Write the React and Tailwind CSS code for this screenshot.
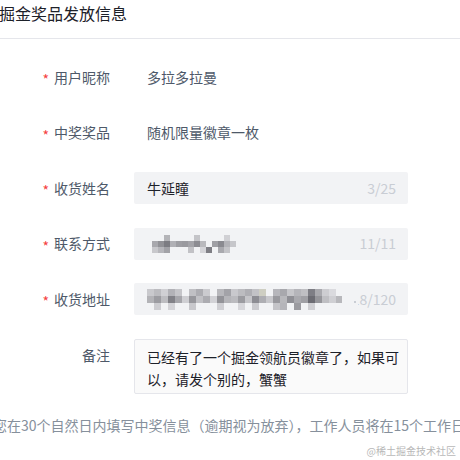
import React from 'react';

const FONT = { fontFamily: '"Noto Sans CJK SC", "Noto Sans", sans-serif' };

// pixelated mosaic that hides private data
const Mosaic = ({ width, cells, rows, size = 6 }) => (
  <svg width={width} height={rows * size} className="block shrink-0">
    {cells.map((row, r) =>
      row.map((c, i) =>
        c ? <rect key={r + '-' + i} x={i * size} y={r * size} width={size} height={size} fill={c} /> : null
      )
    )}
  </svg>
);

const phoneCells = [
  [null, null, '#b4b4b8', null, null, null, null, '#c4c4c8', null, null, null, null, '#d0d0d4', null, null],
  ['#a8a8ad', '#929297', '#7c7c82', '#b0b0b5', '#9e9ea3', '#9a9a9f', '#a4a4a9', '#8c8c92', '#b9b9bd', null, '#a0a0a5', '#8a8a90', '#b3b3b8', '#c6c6ca', null],
  ['#c8c8cc', '#b6b6bb', '#a2a2a7', null, null, null, '#c2c2c6', null, '#d4d4d8', '#7e7e84', null, '#a9a9ae', '#c4c4c8', null, null],
];

const addrCells = [
  ['#c9c9cd', '#bcbcc0', '#d0d0d4', '#b2b2b7', '#c5c5c9', null, '#c0c0c4', '#adadb2', '#cbcbcf', null, '#b8b8bc', '#a3a3a8', '#c9c9cd', '#bcbcc0', '#afafb4', '#c2c2c6', '#cecec2', null, '#b6b6bb', '#a8a8ad', '#c6c6ca', '#b5b5ba', '#bfbfc3', '#7e7e85', '#a9a9ae', '#cdcdd1', '#dadade', null, null, null],
  ['#b3b3b7', '#9c9ca1', '#bdbdc1', '#818187', '#a6a6ab', '#cfcfd3', '#97979c', '#c1c1c5', '#acacb1', '#d2d2d6', '#939398', '#b5b5b9', '#bbbbbf', '#9b9ba0', '#c5c5c9', '#8d8d93', '#aeaeb3', '#c8c8cc', '#99999e', '#b8b8bc', '#8f8f95', '#a9a9ae', '#a0a0a5', '#6c6c73', '#95959a', '#bfbfc3', '#cfcfd3', '#b8b8bc', '#c3c3c7', '#cbcbcf'],
  [null, '#cdcdd1', null, '#d3d3d7', null, null, '#c8c8cc', null, null, null, '#cfcfd3', null, null, '#d6d6da', null, '#cbcbcf', null, null, '#c4c4c8', '#b5b5ba', null, '#9b9ba0', null, '#cfcfd3', null, null, null, null, null, null],
];

const Label = ({ required, children }) => (
  <div className="w-[110px] shrink-0 flex items-center justify-end gap-[5px] text-[14px] text-[#4e5969]">
    {required && <span className="text-[#f53f3f] text-[14px] leading-none translate-y-[2px]">*</span>}
    <span>{children}</span>
  </div>
);

const Row = ({ label, required = true, children, top = false }) => (
  <div className={`flex ${top ? 'items-start' : 'items-center'} gap-6`}>
    <div className={top ? 'h-8 flex items-center pt-[2px]' : ''}>
      <Label required={required}>{label}</Label>
    </div>
    {children}
  </div>
);

const Field = ({ children, count }) => (
  <div className="w-[274px] h-8 rounded-[2px] bg-[#f2f3f5] flex items-center pl-[12px] pr-[12px] overflow-hidden">
    <div className="flex-1 flex items-center min-w-0">{children}</div>
    <span className="text-[14px] text-[#c9cdd4] shrink-0">{count}</span>
  </div>
);

export default function App() {
  return (
    <div className="w-[460px] h-[460px] bg-white overflow-hidden relative" style={FONT}>
      <div className="h-[39px] border-b border-[#e5e6eb] flex items-center -ml-[1px] pb-[13px]">
        <span className="text-[16px] text-[#1d2129]">掘金奖品发放信息</span>
      </div>

      <div className="pt-[22px] flex flex-col gap-[23.5px]">
        <Row label="用户昵称">
          <div className="h-8 flex items-center pl-[13px] text-[14px] text-[#4e5969]">多拉多拉曼</div>
        </Row>
        <Row label="中奖奖品">
          <div className="h-8 flex items-center pl-[13px] text-[14px] text-[#4e5969]">随机限量徽章一枚</div>
        </Row>
        <Row label="收货姓名">
          <Field count="3/25">
            <span className="text-[14px] text-[#1d2129] pl-[1px]">牛延瞳</span>
          </Field>
        </Row>
        <Row label="联系方式">
          <Field count="11/11">
            <div className="pl-[6px]">
              <Mosaic width={90} rows={3} cells={phoneCells} />
            </div>
          </Field>
        </Row>
        <Row label="收货地址">
          <Field count={<span className="relative">
            <span className="absolute -left-[2px] top-[1px] w-[16px] h-[18px] bg-[#f2f3f5]" />
            <span className="absolute left-[10px] top-[12px] w-[2px] h-[2px] bg-[#c9cdd4]" />
            118/120
          </span>}>
            <div className="pl-[1px]">
              <Mosaic width={210} rows={3} size={7} cells={addrCells} />
            </div>
          </Field>
        </Row>
        <Row label="备注" required={false} top>
          <div className="w-[274px] h-[55px] rounded-[2px] border border-[#e5e6eb] bg-[#fafafa] pl-[12px] pr-[6px] pt-[6px] text-[14px] leading-[22px] text-[#1d2129]">
            已经有了一个掘金领航员徽章了，如果可以，请发个别的，蟹蟹
          </div>
        </Row>
      </div>

      <div className="mt-[21px] -ml-[7px] whitespace-nowrap text-[14px] text-[#86909c]">
        您在30个自然日内填写中奖信息（逾期视为放弃），工作人员将在15个工作日内发放奖品
      </div>

      <div className="absolute right-[4px] bottom-[2px] text-[10px] text-[#b8b8b8]" style={{ fontFamily: '"Noto Sans CJK SC", serif' }}>
        @稀土掘金技术社区
      </div>
    </div>
  );
}
